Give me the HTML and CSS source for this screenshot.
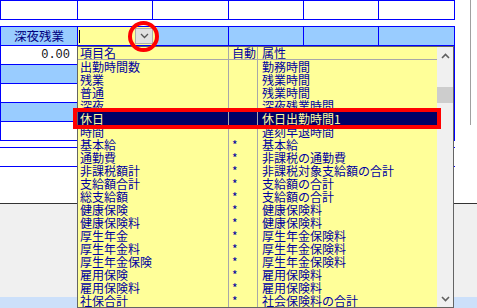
FILE: index.html
```html
<!DOCTYPE html>
<html lang="ja">
<head>
<meta charset="utf-8">
<link rel="stylesheet" href="styles.css">
</head>
<body>
<div class="screen">
  <div class="upper">
    <div class="sheet">
      <div class="trow first">
        <div class="c w77"></div><div class="c w75"></div><div class="c w76"></div><div class="c w75"></div><div class="c w75"></div><div class="c w76"></div>
      </div>
      <div class="gap"></div>
      <div class="trow first blue">
        <div class="c w77 label">深夜残業</div>
        <div class="c w151 editor-cell">
          <div class="editor">
            <span class="caret"></span>
            <span class="drop-btn"><svg width="9" height="6" viewBox="0 0 9 6"><polyline points="1,1 4.5,4.5 8,1" fill="none" stroke="#555" stroke-width="1.3"/></svg></span>
          </div>
        </div>
        <div class="c w75"></div><div class="c w75"></div><div class="c w76"></div>
      </div>
      <div class="trow"><div class="c w77 num">0.00</div><div class="c w377"></div></div>
      <div class="trow blue"><div class="c w77"></div><div class="c w377"></div></div>
      <div class="trow"><div class="c w77"></div><div class="c w377"></div></div>
      <div class="trow blue"><div class="c w77"></div><div class="c w377"></div></div>
      <div class="trow"><div class="c w77"></div><div class="c w377"></div></div>
      <div class="gap"></div>
      <div class="band"></div>
    </div>
    <div class="strip"><div class="strip-edge"></div></div>
  </div>
  <div class="bottom">
    <div class="bottom-gray"></div>
    <div class="bottom-band"></div>
  </div>

  <div class="list">
    <div class="list-body">
      <div class="lrow head"><div class="lc c1">項目名</div><div class="lc c2">自動</div><div class="lc c3">属性</div></div>
      <div class="lrow"><div class="lc c1">出勤時間数</div><div class="lc c2"></div><div class="lc c3">勤務時間</div></div>
      <div class="lrow"><div class="lc c1">残業</div><div class="lc c2"></div><div class="lc c3">残業時間</div></div>
      <div class="lrow"><div class="lc c1">普通</div><div class="lc c2"></div><div class="lc c3">残業時間</div></div>
      <div class="lrow"><div class="lc c1">深夜</div><div class="lc c2"></div><div class="lc c3">深夜残業時間</div></div>
      <div class="lrow sel"><div class="lc c1">休日</div><div class="lc c2"></div><div class="lc c3">休日出勤時間1</div></div>
      <div class="lrow"><div class="lc c1">時間</div><div class="lc c2"></div><div class="lc c3">遅刻早退時間</div></div>
      <div class="lrow"><div class="lc c1">基本給</div><div class="lc c2">*</div><div class="lc c3">基本給</div></div>
      <div class="lrow"><div class="lc c1">通勤費</div><div class="lc c2">*</div><div class="lc c3">非課税の通勤費</div></div>
      <div class="lrow"><div class="lc c1">非課税額計</div><div class="lc c2">*</div><div class="lc c3">非課税対象支給額の合計</div></div>
      <div class="lrow"><div class="lc c1">支給額合計</div><div class="lc c2">*</div><div class="lc c3">支給額の合計</div></div>
      <div class="lrow"><div class="lc c1">総支給額</div><div class="lc c2">*</div><div class="lc c3">支給額の合計</div></div>
      <div class="lrow"><div class="lc c1">健康保険</div><div class="lc c2">*</div><div class="lc c3">健康保険料</div></div>
      <div class="lrow"><div class="lc c1">健康保険料</div><div class="lc c2">*</div><div class="lc c3">健康保険料</div></div>
      <div class="lrow"><div class="lc c1">厚生年金</div><div class="lc c2">*</div><div class="lc c3">厚生年金保険料</div></div>
      <div class="lrow"><div class="lc c1">厚生年金料</div><div class="lc c2">*</div><div class="lc c3">厚生年金保険料</div></div>
      <div class="lrow"><div class="lc c1">厚生年金保険</div><div class="lc c2">*</div><div class="lc c3">厚生年金保険料</div></div>
      <div class="lrow"><div class="lc c1">雇用保険</div><div class="lc c2">*</div><div class="lc c3">雇用保険料</div></div>
      <div class="lrow"><div class="lc c1">雇用保険料</div><div class="lc c2">*</div><div class="lc c3">雇用保険料</div></div>
      <div class="lrow"><div class="lc c1">社保合計</div><div class="lc c2">*</div><div class="lc c3">社会保険料の合計</div></div>
    </div>
    <div class="scrollbar">
      <div class="sb-btn"><svg width="9" height="6" viewBox="0 0 9 6"><polyline points="1,5 4.5,1.5 8,5" fill="none" stroke="#606060" stroke-width="1.6"/></svg></div>
      <div class="sb-thumb"></div>
      <div class="sb-track"></div>
      <div class="sb-btn"><svg width="9" height="6" viewBox="0 0 9 6"><polyline points="1,1 4.5,4.5 8,1" fill="none" stroke="#606060" stroke-width="1.6"/></svg></div>
    </div>
  </div>

  <div class="mark-box"></div>
  <div class="mark-circle"></div>
</div>
</body>
</html>
```

FILE: styles.css
```css
* { box-sizing: border-box; }
html, body { margin: 0; padding: 0; }
body {
  width: 477px;
  height: 308px;
  overflow: hidden;
  background: #ffffff;
  font-family: "Noto Sans CJK JP", "Noto Sans CJK SC", sans-serif;
  font-size: 12px;
}
.screen {
  position: relative;
  width: 477px;
  height: 308px;
  display: flex;
  flex-direction: column;
}
.upper {
  display: flex;
  height: 203px;
  flex: none;
}
.sheet {
  width: 455px;
  flex: none;
}
.trow {
  display: flex;
  border-left: 1px solid #0000ff;
  width: 455px;
}
.trow.first { border-top: 1px solid #0000ff; }
.trow.blue .c { background: #99ccff; }
.c {
  height: 19px;
  border-right: 1px solid #0000ff;
  border-bottom: 1px solid #0000ff;
  flex: none;
}
.w75 { width: 75px; }
.w76 { width: 76px; }
.w77 { width: 77px; }
.w151 { width: 151px; }
.w377 { width: 377px; }
.gap { height: 6px; }
.label {
  color: #000080;
  text-align: center;
  line-height: 18px;
  font-size: 12.5px;
}
.num {
  font-family: "Liberation Mono", monospace;
  font-size: 12px;
  text-align: right;
  padding-right: 7px;
  line-height: 18px;
  color: #111;
}
.editor-cell { display: flex; }
.trow.blue .editor-cell { background: #99ccff; }
.editor {
  width: 79px;
  height: 18px;
  background: #ffff99;
  display: flex;
  align-items: flex-start;
}
.caret {
  width: 1px;
  height: 13px;
  margin: 3px 0 0 1px;
  background: #000;
}
.drop-btn {
  margin: 1px 0 0 55px;
  width: 18px;
  height: 16px;
  background: #e1e1e1;
  border: 1px solid #adadad;
  display: flex;
  align-items: center;
  justify-content: center;
}
.band {
  width: 455px;
  height: 20px;
  border-top: 1px solid #0000ff;
  border-bottom: 1px solid #0000ff;
}
.strip {
  width: 22px;
  flex: none;
}
.strip-edge {
  width: 16px;
  height: 125px;
  border-right: 1px solid #a0a0a0;
}
.bottom {
  flex: 1;
  display: flex;
  flex-direction: column;
  border-top: 1px solid #333;
}
.bottom-gray {
  flex: 1;
  background: #f0f0f0;
}
.bottom-band {
  height: 11px;
  background: #cce0fa;
}

/* popup list */
.list {
  position: absolute;
  left: 77px;
  top: 46px;
  width: 377px;
  height: 262px;
  border: 1px solid #646464;
  background: #ffff99;
  display: flex;
  overflow: hidden;
}
.list-body {
  width: 359px;
  flex: none;
  display: flex;
  flex-direction: column;
}
.lrow {
  display: flex;
  height: 13px;
  flex: none;
  color: #0000a0;
  line-height: 13px;
  white-space: nowrap;
}
.lrow.head {
  height: 13px;
  line-height: 12px;
  border-bottom: 1px solid #a8a8a8;
}
.lrow.sel {
  background: #000066;
  color: #ffffa0;
}
.lc {
  flex: none;
}
.c1 {
  width: 151px;
  padding-left: 2px;
  border-right: 1px solid #a8a8a8;
}
.c2 {
  width: 29px;
  padding-left: 3px;
  border-right: 1px solid #a8a8a8;
}
.c3 {
  width: 179px;
  padding-left: 4px;
}
.scrollbar {
  width: 16px;
  flex: none;
  background: #f0f0f0;
  display: flex;
  flex-direction: column;
}
.sb-btn {
  height: 17px;
  flex: none;
  display: flex;
  align-items: center;
  justify-content: center;
}
.sb-thumb {
  margin-top: 23px;
  height: 16px;
  flex: none;
  background: #cdcdcd;
}
.sb-track { flex: 1; }

/* annotation marks */
.mark-box {
  position: absolute;
  left: 73px;
  top: 108px;
  width: 368px;
  height: 21px;
  border: 4px solid #ff0000;
}
.mark-circle {
  position: absolute;
  left: 128px;
  top: 21px;
  width: 31px;
  height: 31px;
  border: 4px solid #ff0000;
  border-radius: 50%;
}
```
